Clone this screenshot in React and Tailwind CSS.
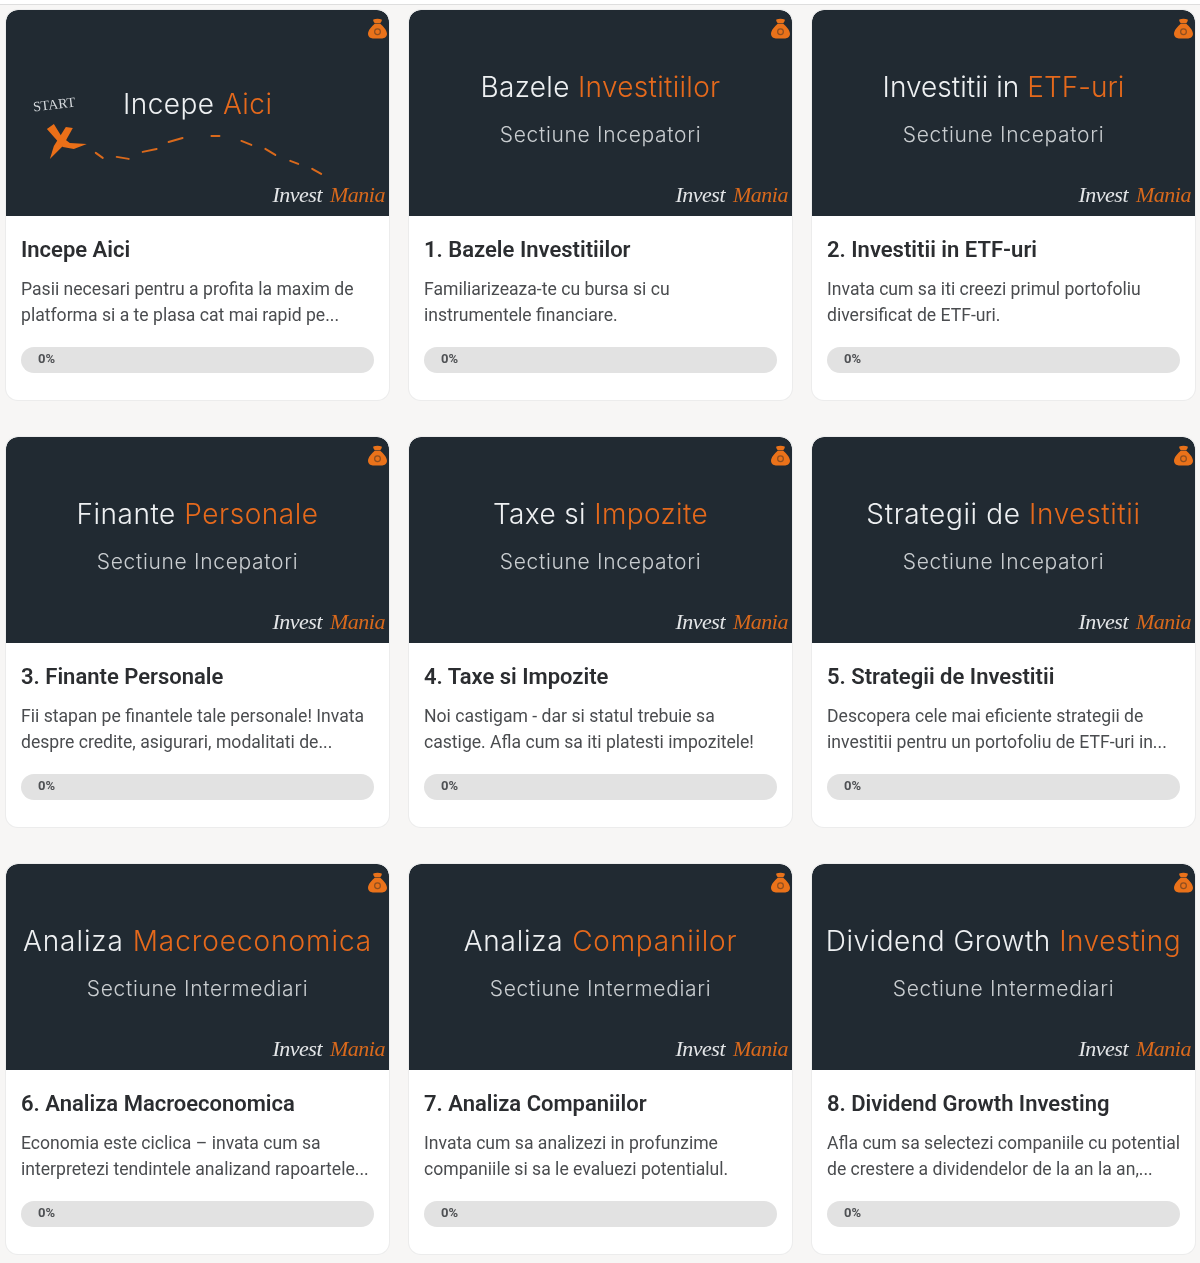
const cards = [
  { a: "Incepe", b: "Aici", sub: "", start: true, tr: "tracking-[0.46px]", title: "Incepe Aici", d1: "Pasii necesari pentru a profita la maxim de", d2: "platforma si a te plasa cat mai rapid pe..." },
  { a: "Bazele", b: "Investitiilor", sub: "Sectiune Incepatori", tr: "tracking-[0.3px]", title: "1. Bazele Investitiilor", d1: "Familiarizeaza-te cu bursa si cu", d2: "instrumentele financiare." },
  { a: "Investitii in", b: "ETF-uri", sub: "Sectiune Incepatori", tr: "tracking-[0.03px]", title: "2. Investitii in ETF-uri", d1: "Invata cum sa iti creezi primul portofoliu", d2: "diversificat de ETF-uri." },
  { a: "Finante", b: "Personale", sub: "Sectiune Incepatori", tr: "tracking-[0.54px]", title: "3. Finante Personale", d1: "Fii stapan pe finantele tale personale! Invata", d2: "despre credite, asigurari, modalitati de..." },
  { a: "Taxe si", b: "Impozite", sub: "Sectiune Incepatori", tr: "tracking-[0.36px]", title: "4. Taxe si Impozite", d1: "Noi castigam - dar si statul trebuie sa", d2: "castige. Afla cum sa iti platesti impozitele!" },
  { a: "Strategii de", b: "Investitii", sub: "Sectiune Incepatori", tr: "tracking-[0.62px]", title: "5. Strategii de Investitii", d1: "Descopera cele mai eficiente strategii de", d2: "investitii pentru un portofoliu de ETF-uri in..." },
  { a: "Analiza", b: "Macroeconomica", sub: "Sectiune Intermediari", tr: "tracking-[0.94px]", title: "6. Analiza Macroeconomica", d1: "Economia este ciclica – invata cum sa", d2: "interpretezi tendintele analizand rapoartele..." },
  { a: "Analiza", b: "Companiilor", sub: "Sectiune Intermediari", tr: "tracking-[0.77px]", title: "7. Analiza Companiilor", d1: "Invata cum sa analizezi in profunzime", d2: "companiile si sa le evaluezi potentialul." },
  { a: "Dividend Growth", b: "Investing", sub: "Sectiune Intermediari", tr: "tracking-[0.52px]", title: "8. Dividend Growth Investing", d1: "Afla cum sa selectezi companiile cu potential", d2: "de crestere a dividendelor de la an la an,..." },
];

const dashes = [
  [96, 153, 103, 158], [117, 157, 129, 159], [143, 152, 157, 149], [169, 142, 183, 138],
  [212, 136, 220, 136], [242, 141, 252, 145], [266, 149, 276, 155], [291, 161, 299, 164], [313, 169, 322, 174],
];

function Bag() {
  return (
    <svg viewBox="0 0 20 22" className="absolute right-[2px] top-[8px] w-[19px] h-[21px]">
      <path d="M5.6 1.4 C8 .4 12 .4 14.4 1.4 C15 3 13.6 4.4 12.8 5.4 L7.2 5.4 C6.4 4.4 5 3 5.6 1.4Z" fill="#ea721a" />
      <path d="M7 6 L13 6 C15.6 8.4 20 12.6 20 16.6 C20 20.2 17 21.6 14.6 21.4 L5.4 21.4 C3 21.6 0 20.2 0 16.6 C0 12.6 4.4 8.4 7 6Z" fill="#ea721a" />
      <circle cx="10" cy="14.4" r="3" fill="none" stroke="#8f4f20" strokeWidth="1.3" />
    </svg>
  );
}

function Hero({ c }) {
  return (
    <div className="relative h-[206px] bg-[#212a32] rounded-t-[12px] overflow-hidden flex flex-col items-center font-['Inter',sans-serif]">
      <Bag />
      {c.start ? (
        <>
          <svg viewBox="6 10 384 206" className="absolute inset-0 w-full h-full">
            <path d="M66 127 L73 128 L63 146 L50 159 L54 146 Z" fill="#ea6f18" />
            <path d="M47 129 L54 124 L62 137 L70 143 L87 144 L74 149 L63 147 L55 138 Z" fill="#ea6f18" />
            {dashes.map((d, i) => (
              <line key={i} x1={d[0]} y1={d[1]} x2={d[2]} y2={d[3]} stroke="#d9691c" strokeWidth="2" strokeLinecap="round" />
            ))}
          </svg>
          <span className="absolute left-[27px] top-[87px] text-[14px] leading-[16px] text-[#d4d8dc] font-['Liberation_Serif',serif] -rotate-[7deg]">START</span>
          <div className={"absolute left-[117px] top-[76px] text-[28px] leading-[36px] font-light whitespace-nowrap " + c.tr}>
            <span className="text-[#eef0f2]">{c.a} </span>
            <span className="text-[#e5691c]">{c.b}</span>
          </div>
        </>
      ) : (
        <>
          <div className={"mt-[58px] text-[28px] leading-[38px] font-light whitespace-nowrap " + c.tr}>
            <span className="text-[#eef0f2]">{c.a} </span>
            <span className="text-[#e5691c]">{c.b}</span>
          </div>
          <div className="mt-[16px] text-[21px] leading-[26px] font-light text-[#c9cdd0] tracking-[0.68px] whitespace-nowrap">{c.sub}</div>
        </>
      )}
      <div className="absolute right-[4px] bottom-[7px] text-[22px] leading-[28px] italic font-['Liberation_Serif',serif] whitespace-nowrap tracking-[-0.5px]">
        <span className="text-[#e4e6e8]">Invest</span>
        <span className="text-[#d9691c] ml-[8px]">Mania</span>
      </div>
    </div>
  );
}

function Card({ c }) {
  return (
    <div className="bg-white rounded-[12px] shadow-[0_0_0_1px_#ececec] overflow-hidden flex flex-col">
      <Hero c={c} />
      <div className="px-[15px] font-['Roboto',sans-serif]">
        <h3 className="mt-[20px] text-[22px] leading-[28px] font-semibold text-[#2b2d30] whitespace-nowrap">{c.title}</h3>
        <p className="mt-[12px] text-[17.6px] leading-[26px] text-[#4a4c4f] whitespace-nowrap">
          {c.d1}
          <br />
          {c.d2}
        </p>
        <div className="mt-[19px] h-[26px] rounded-full bg-[#e2e2e2] pl-[17px] flex items-center">
          <span className="text-[13px] leading-[22px] -mt-[3px] font-bold text-[#4f5154]">0%</span>
        </div>
      </div>
    </div>
  );
}

export default function App() {
  return (
    <div className="w-[1200px] h-[1263px] bg-[#f7f6f5] overflow-hidden">
      <div className="h-[5px] bg-white border-b border-[#dedede]" />
      <div className="pl-[6px] pr-[5px] pt-[5px] grid grid-cols-3 gap-x-[20px] gap-y-[37px] auto-rows-[390px] blur-[0.4px]">
        {cards.map((c) => (
          <Card key={c.title} c={c} />
        ))}
      </div>
    </div>
  );
}
